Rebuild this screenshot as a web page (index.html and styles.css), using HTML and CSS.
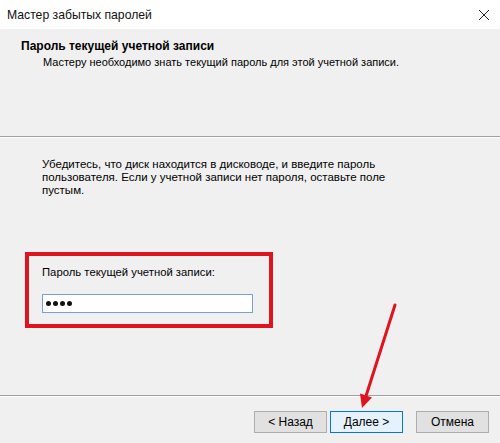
FILE: index.html
```html
<!DOCTYPE html>
<html lang="ru">
<head>
<meta charset="utf-8">
<link rel="stylesheet" href="styles.css">
</head>
<body>
<div class="window">
  <div class="titlebar">
    <span class="title">Мастер забытых паролей</span>
    <svg class="close" width="12" height="12" viewBox="0 0 12 12"><path d="M1 1L11 11M11 1L1 11" stroke="#222" stroke-width="1" fill="none"/></svg>
  </div>
  <div class="header">
    <div class="h-title">Пароль текущей учетной записи</div>
    <div class="h-sub">Мастеру необходимо знать текущий пароль для этой учетной записи.</div>
  </div>
  <div class="content">
    <p class="desc">Убедитесь, что диск находится в дисководе, и введите пароль<br>пользователя. Если у учетной записи нет пароля, оставьте поле<br>пустым.</p>
    <div class="highlight">
      <div class="label">Пароль текущей учетной записи:</div>
      <div class="input"><span class="dot"></span><span class="dot"></span><span class="dot"></span><span class="dot"></span></div>
    </div>
  </div>
  <div class="footer">
    <button class="btn">&lt; Назад</button>
    <button class="btn default">Далее &gt;</button>
    <button class="btn cancel">Отмена</button>
  </div>
  <svg class="arrow" width="500" height="443" viewBox="0 0 500 443">
    <line x1="395" y1="305" x2="366" y2="396" stroke="#e0141e" stroke-width="3" stroke-linecap="round"/>
    <polygon points="362,408 360,393.5 372,397.5" fill="#e0141e"/>
  </svg>
</div>
</body>
</html>
```
FILE: styles.css
```css
* { box-sizing: border-box; }
html, body { margin: 0; padding: 0; }
body {
  width: 500px;
  height: 443px;
  overflow: hidden;
  background: #f0f0f0;
  font-family: "Liberation Sans", Arial, sans-serif;
  font-size: 12px;
  color: #000;
}
.window {
  position: relative;
  width: 500px;
  height: 443px;
  display: flex;
  flex-direction: column;
}
.titlebar {
  height: 29px;
  background: #fff;
  display: flex;
  align-items: center;
  justify-content: space-between;
  padding: 0 10px 0 7px;
}
.title { font-size: 12.2px; color: #111; }
.header {
  height: 108px;
  padding: 9px 0 0 21px;
  border-bottom: 1px solid #a0a0a0;
  box-shadow: 0 1px 0 #fff;
}
.h-title { font-weight: bold; line-height: 16px; }
.h-sub { padding-left: 22px; line-height: 16px; font-size: 11px; }
.content {
  flex: 1;
  padding: 21px 0 0 25px;
  border-bottom: 1px solid #a0a0a0;
  box-shadow: 0 1px 0 #fff;
}
.desc {
  margin: 0 0 0 17px;
  line-height: 13px;
  font-size: 11.5px;
}
.highlight {
  margin-top: 55px;
  width: 248px;
  height: 76px;
  border: 4px solid #e0141e;
  padding: 8px 0 0 13px;
}
.label { line-height: 16px; font-size: 11.3px; }
.input {
  margin-top: 14px;
  width: 211px;
  height: 19px;
  background: #fff;
  border: 1px solid #7aa0cf;
  display: flex;
  align-items: center;
  gap: 2px;
  padding-left: 3px;
}
.dot {
  width: 5px;
  height: 5px;
  border-radius: 50%;
  background: #111;
}
.footer {
  height: 47px;
  display: flex;
  align-items: flex-start;
  justify-content: flex-end;
  padding: 15px 11px 0 0;
  gap: 3px;
}
.btn {
  width: 73px;
  height: 22px;
  background: #e1e1e1;
  border: 1px solid #adadad;
  font-family: "Liberation Sans", Arial, sans-serif;
  font-size: 12px;
  color: #000;
  padding: 0;
}
.btn.default {
  background: #e5f1fb;
  border: 1px solid #0078d7;
}
.btn.cancel { margin-left: 10px; }
.arrow {
  position: absolute;
  left: 0;
  top: 0;
  pointer-events: none;
}
```
